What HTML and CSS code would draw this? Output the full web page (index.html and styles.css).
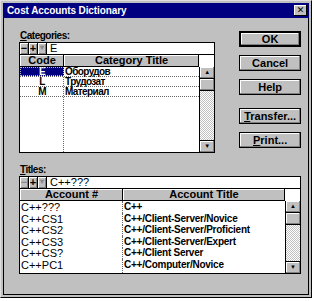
FILE: index.html
```html
<!DOCTYPE html>
<html lang="en-US">
<head>
	<meta charset="UTF-8" />
	<title>Cost Accounts Dictionary</title>
	<link rel="stylesheet" href="styles.css">
</head>
<body>
	<div class="window">
		<div class="titlebar">
			<span>Cost Accounts Dictionary</span>
			<span class="close">&#x2715;</span>
		</div>
		<div class="client">
			<div class="upper">
				<div class="pane cat">
					<label><u>C</u>ategories:</label>
					<div class="tool">
						<span class="tb">&minus;</span>
						<span class="tb">+</span>
						<span class="tb off">&#x25BE;</span>
						<div class="field">E</div>
					</div>
					<div class="table">
						<div class="list">
							<div class="row head">
								<div>Code</div>
								<div>Category Title</div>
							</div>
							<div class="row">
								<div class="c sel">E</div>
								<div>Оборудов</div>
							</div>
							<div class="row">
								<div class="c">L</div>
								<div>Трудозат</div>
							</div>
							<div class="row">
								<div class="c">M</div>
								<div>Материал</div>
							</div>
							<div class="row fill">
								<div></div>
								<div></div>
							</div>
						</div>
						<div class="scroll">
							<div class="cap"></div>
							<div class="arrow">&#x25B2;</div>
							<div class="thumb"></div>
							<div class="track"></div>
							<div class="arrow">&#x25BC;</div>
						</div>
					</div>
				</div>
				<div class="buttons">
					<button class="btn default">OK</button>
					<button class="btn">Cancel</button>
					<button class="btn">Help</button>
					<button class="btn gap"><u>T</u>ransfer...</button>
					<button class="btn"><u>P</u>rint...</button>
				</div>
			</div>
			<div class="pane titles">
				<label><u>T</u>itles:</label>
				<div class="tool">
					<span class="tb off">&minus;</span>
					<span class="tb">+</span>
					<span class="tb off">&#x25BE;</span>
					<div class="field">C++???</div>
				</div>
				<div class="table">
					<div class="list">
						<div class="row head">
							<div>Account #</div>
							<div>Account Title</div>
						</div>
						<div class="row"><div>C++???</div><div>C++</div></div>
						<div class="row"><div>C++CS1</div><div>C++/Client-Server/Novice</div></div>
						<div class="row"><div>C++CS2</div><div>C++/Client-Server/Proficient</div></div>
						<div class="row"><div>C++CS3</div><div>C++/Client-Server/Expert</div></div>
						<div class="row"><div>C++CS?</div><div>C++/Client Server</div></div>
						<div class="row"><div>C++PC1</div><div>C++/Computer/Novice</div></div>
						<div class="row fill"><div></div><div></div></div>
					</div>
					<div class="scroll">
						<div class="cap"></div>
						<div class="arrow">&#x25B2;</div>
						<div class="thumb"></div>
						<div class="track"></div>
						<div class="arrow">&#x25BC;</div>
					</div>
				</div>
			</div>
		</div>
	</div>
</body>
</html>
```

FILE: styles.css
```css
body {
	margin: 0;
	font-family: "Liberation Sans", Arial, sans-serif;
	font-size: 11px;
	background-color: #fff;
}

.window {
	width: 312px;
	height: 298px;
	box-sizing: border-box;
	background-color: #c0c0c0;
	border: 1px solid;
	border-color: #dfdfdf #000 #000 #dfdfdf;
	padding: 2px;
	display: flex;
	flex-direction: column;
}

.titlebar {
	height: 15px;
	background-color: #000080;
	color: #fff;
	font-size: 10px;
	font-weight: bold;
	letter-spacing: -0.1px;
	display: flex;
	align-items: center;
	justify-content: space-between;
	padding: 0 2px 0 4px;
}

.close {
	width: 13px;
	height: 11px;
	background-color: #c0c0c0;
	color: #000;
	font-family: "DejaVu Sans", sans-serif;
	font-size: 9px;
	font-weight: bold;
	line-height: 11px;
	text-align: center;
	box-shadow: inset -1px -1px #000, inset 1px 1px #fff;
}

.client {
	flex: 1;
	border: 1px solid #000;
	border-top: none;
	padding: 11px 7px 0 15px;
	display: flex;
	flex-direction: column;
}

.upper {
	display: flex;
	align-items: flex-start;
	gap: 24px;
}

.pane label {
	display: block;
	font-size: 10px;
	font-weight: bold;
	letter-spacing: -0.5px;
	height: 13px;
	line-height: 13px;
	padding-left: 1px;
}

.cat {
	width: 197px;
}

.tool {
	display: flex;
	height: 11px;
	border: 1px solid #000;
	border-bottom: none;
	background-color: #fff;
}

.tb {
	width: 9px;
	height: 11px;
	box-sizing: border-box;
	border-right: 1px solid #000;
	background-color: #c0c0c0;
	font-weight: bold;
	font-size: 11px;
	line-height: 10px;
	text-align: center;
	box-shadow: inset 1px 1px #fff, inset -1px -1px #808080;
}

.tb.off {
	color: #8a8a8a;
}

.tb.off:nth-child(3) {
	font-size: 8px;
}

.field {
	flex: 1;
	padding-left: 3px;
	line-height: 11px;
}

.table {
	display: flex;
	border: 1px solid #000;
	background-color: #fff;
}

.cat .table {
	height: 97px;
}

.titles {
	margin-top: 10px;
}

.titles .table {
	height: 84px;
}

.list {
	flex: 1;
	display: flex;
	flex-direction: column;
}

.row {
	display: grid;
	white-space: nowrap;
}

.cat .row {
	grid-template-columns: 44px 1fr;
	height: 10px;
	box-sizing: border-box;
	line-height: 9px;
	border-bottom: 1px dotted #666;
	font-size: 10px;
	font-weight: bold;
	letter-spacing: -0.6px;
}

.titles .row {
	grid-template-columns: 103px 1fr;
	height: 11.5px;
	line-height: 12px;
}

.titles .row div:last-child {
	font-size: 10px;
	font-weight: bold;
	letter-spacing: -0.25px;
}

.row div {
	border-right: 1px dotted #666;
	padding-left: 1px;
}

.row div:last-child {
	border-right: none;
}

.list .row.head {
	height: 12px;
	box-sizing: border-box;
	line-height: 11px;
	border-bottom: 1px solid #000;
	font-size: 11px;
	font-weight: bold;
	letter-spacing: 0;
}

.list .row.head div {
	text-align: center;
	background-color: #c0c0c0;
	border-right: 1px solid #000;
	box-shadow: inset 1px 1px #fff;
	font-size: 11px;
	letter-spacing: 0;
}

.titles .row.head div:last-child {
	border-right: 1px solid #000;
}

.c {
	text-align: center;
}

.row div.sel {
	background-color: #000080;
	color: #fff;
	outline: 1px dotted #c0c0c0;
	outline-offset: -1px;
}

.list .row.fill {
	flex: 1;
	border-bottom: none;
}

.scroll {
	width: 14px;
	display: flex;
	flex-direction: column;
	border-left: 1px solid #000;
}

.scroll .cap {
	height: 12px;
	background-color: #fff;
	margin-left: -1px;
	border-left: 1px solid #fff;
}

.arrow {
	height: 11px;
	background-color: #c0c0c0;
	font-size: 6px;
	line-height: 11px;
	text-align: center;
	box-shadow: inset -1px -1px #808080, inset 1px 1px #fff;
	border-bottom: 1px solid #000;
}

.arrow:last-child {
	border-bottom: none;
	border-top: 1px solid #000;
}

.thumb {
	height: 11px;
	background-color: #c0c0c0;
	box-shadow: inset -1px -1px #808080, inset 1px 1px #fff;
	border-bottom: 1px solid #000;
}

.track {
	flex: 1;
	background: repeating-conic-gradient(#c0c0c0 0 25%, #fff 0 50%) 0 0 / 2px 2px;
}

.buttons {
	display: flex;
	flex-direction: column;
	gap: 8px;
	width: 62px;
	margin-top: 2px;
}

.btn {
	height: 16px;
	padding: 0;
	font-family: inherit;
	font-size: 11px;
	font-weight: bold;
	background-color: #c0c0c0;
	border: 1px solid #000;
	box-shadow: inset -1px -1px #808080, inset 1px 1px #fff;
	color: #000;
}

.btn.default {
	border-width: 2px;
}

.btn.gap {
	margin-top: 5px;
}
```
